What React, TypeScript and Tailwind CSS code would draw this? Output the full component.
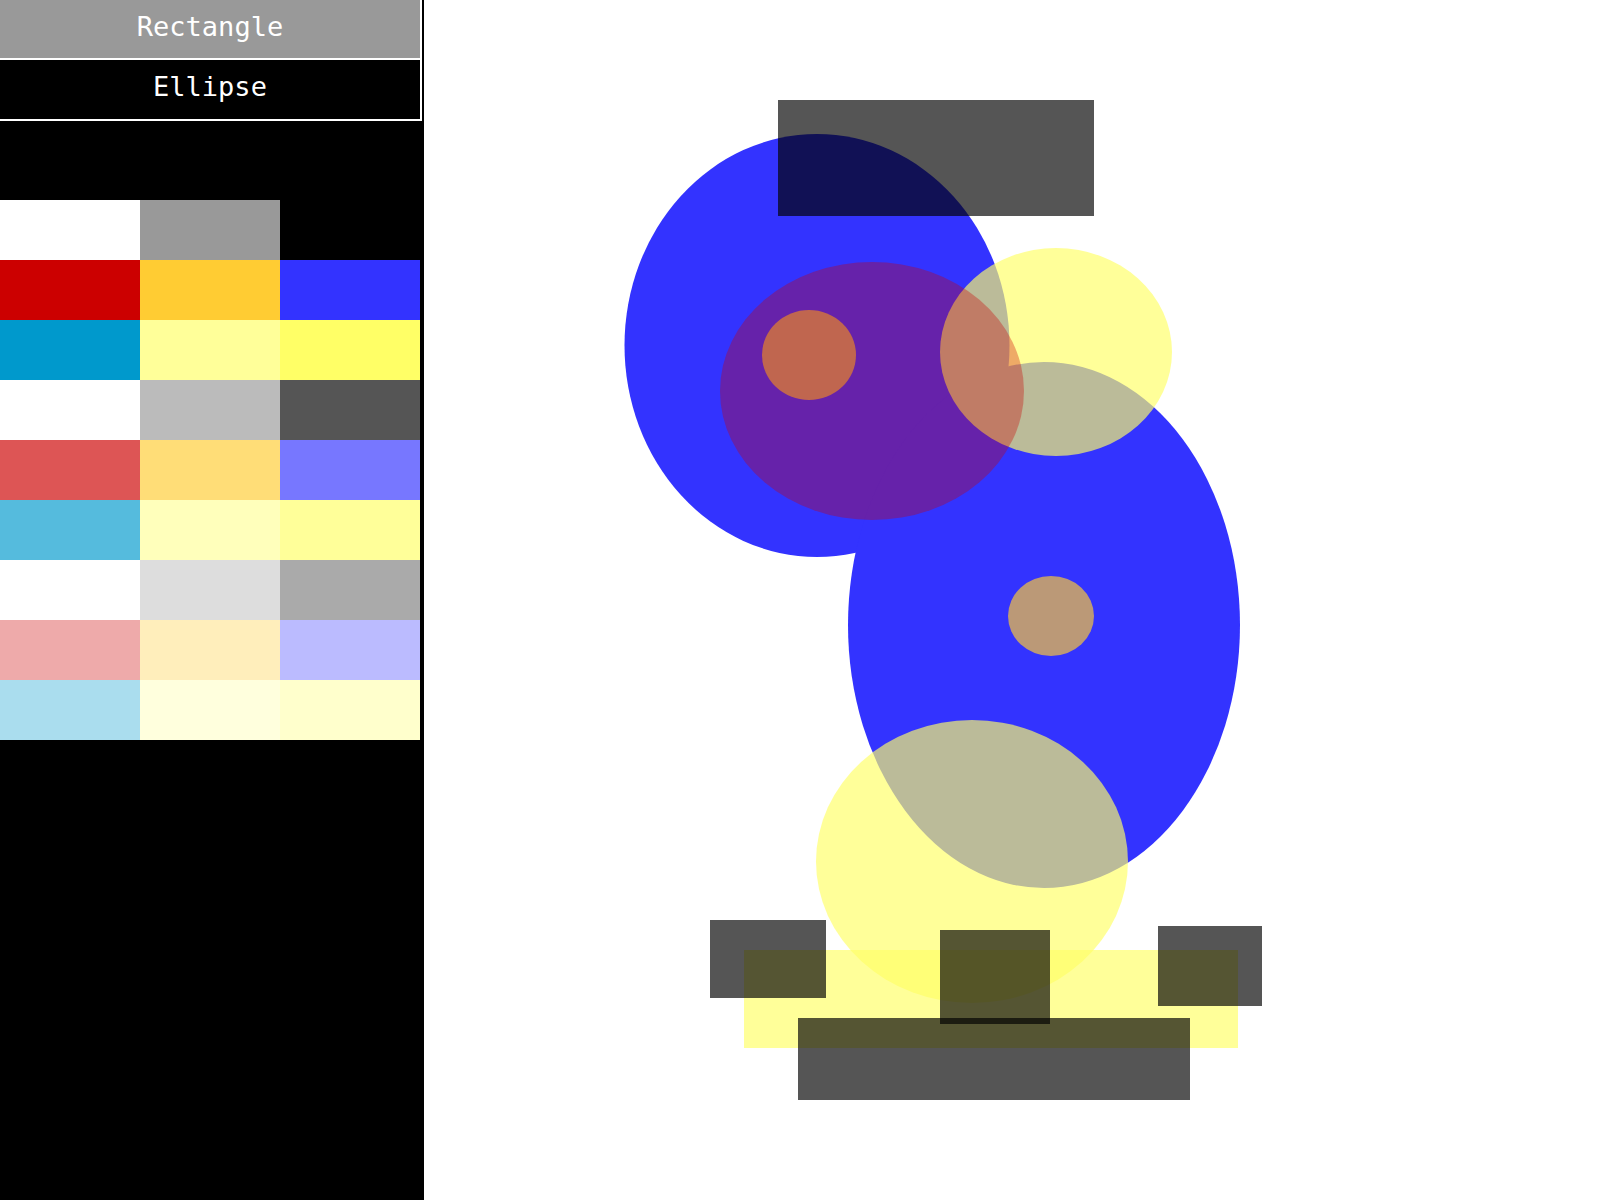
import React from "react";

const palette = [
  "#ffffff", "#999999", "#000000",
  "#cc0000", "#ffcc33", "#3333ff",
  "#0099cc", "#ffff99", "#ffff66",
  "#ffffff", "#bbbbbb", "#555555",
  "#dd5555", "#ffdd77", "#7777ff",
  "#55bbdd", "#ffffbb", "#ffff99",
  "#ffffff", "#dddddd", "#aaaaaa",
  "#eeaaaa", "#ffeebb", "#bbbbff",
  "#aaddee", "#ffffdd", "#ffffcc",
];

const mono = { fontFamily: '"DejaVu Sans Mono", "Liberation Mono", monospace' };

export default function App() {
  const Y = { fill: "#ffff66", fillOpacity: 0.667 };
  const K = { fill: "#000000", fillOpacity: 0.667 };
  const O = { fill: "#ffcc33", fillOpacity: 0.667 };
  return (
    <div className="flex w-[1600px] h-[1200px] bg-white overflow-hidden">
      <div className="w-[424px] h-[1200px] bg-black flex flex-col shrink-0">
        <button
          className="w-[422px] h-[60px] pb-[4px] bg-[#999999] border-r-2 border-b-2 border-white text-white text-[27px] flex items-center justify-center"
          style={mono}
        >
          Rectangle
        </button>
        <button
          className="w-[422px] h-[61px] pb-[4px] bg-black border-r-2 border-b-2 border-white text-white text-[27px] flex items-center justify-center"
          style={mono}
        >
          Ellipse
        </button>
        <div className="mt-[79px] grid grid-cols-3 w-[420px]">
          {palette.map((c, i) => (
            <div key={i} className="h-[60px]" style={{ backgroundColor: c }} />
          ))}
        </div>
      </div>
      <svg className="flex-1 h-[1200px]" viewBox="424 0 1176 1200" width="1176" height="1200">
        <ellipse cx={817} cy={345.5} rx={192.5} ry={211.5} fill="#3333ff" />
        <ellipse cx={1044} cy={625} rx={196} ry={263} fill="#3333ff" />
        <ellipse cx={809} cy={355} rx={47} ry={45} {...O} />
        <ellipse cx={1051} cy={616} rx={43} ry={40} {...O} />
        <ellipse cx={1056} cy={352} rx={116} ry={104} {...Y} />
        <ellipse cx={972} cy={861.5} rx={156} ry={141.5} {...Y} />
        <rect x={744} y={950} width={494} height={98} {...Y} />
        <ellipse cx={872} cy={391} rx={152} ry={129} fill="#cc0000" fillOpacity={0.333} />
        <rect x={778} y={100} width={316} height={116} {...K} />
        <rect x={710} y={920} width={116} height={78} {...K} />
        <rect x={940} y={930} width={110} height={94} {...K} />
        <rect x={1158} y={926} width={104} height={80} {...K} />
        <rect x={798} y={1018} width={392} height={82} {...K} />
      </svg>
    </div>
  );
}
